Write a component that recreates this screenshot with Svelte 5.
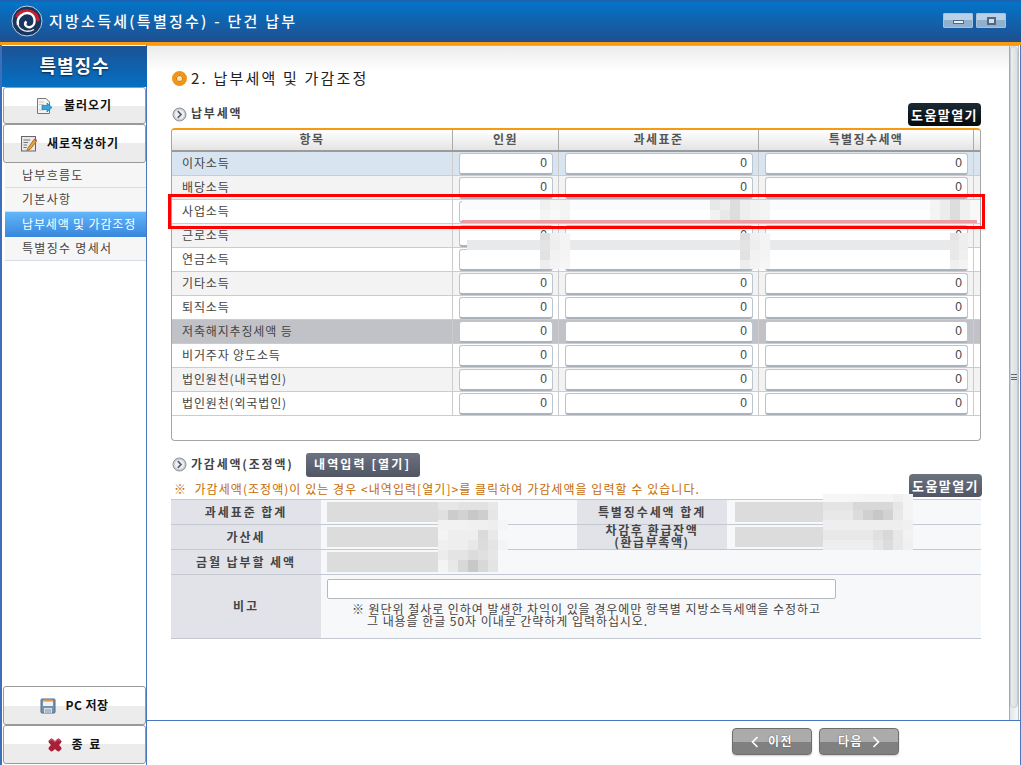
<script>
  const rows = [
    { label: '이자소득', tone: 'blue', vals: ['0', '0', '0'] },
    { label: '배당소득', tone: 'alt', vals: ['0', '0', '0'] },
    { label: '사업소득', tone: '', vals: ['', '', ''] },
    { label: '근로소득', tone: 'alt', vals: ['0', '0', '0'] },
    { label: '연금소득', tone: '', vals: ['', '', ''] },
    { label: '기타소득', tone: 'alt', vals: ['0', '0', '0'] },
    { label: '퇴직소득', tone: '', vals: ['0', '0', '0'] },
    { label: '저축해지추징세액 등', tone: 'dark', vals: ['0', '0', '0'] },
    { label: '비거주자 양도소득', tone: '', vals: ['0', '0', '0'] },
    { label: '법인원천(내국법인)', tone: 'alt', vals: ['0', '0', '0'] },
    { label: '법인원천(외국법인)', tone: '', vals: ['0', '0', '0'] }
  ];
  const menu = ['납부흐름도', '기본사항', '납부세액 및 가감조정', '특별징수 명세서'];

  // Mosaic (pixelated) redaction patches that lie over the form: [x, y, w, h, colour]
  const bands = [
    [462, 200, 515, 10, '#fafbfc'],
    [462, 220, 515, 3, '#e8a0a4'],
    [467, 240, 501, 10, '#e8e9eb']
  ];
  const grid = (x, ys, ws, data) => {
    const out = [];
    data.forEach((line, r) => {
      let cx = x;
      line.forEach((c, i) => {
        if (c) out.push([cx, ys[r], ws, ys[r + 1] - ys[r], '#' + c]);
        cx += ws;
      });
    });
    return out;
  };
  const cells = [
    ...grid(540, [200, 210, 220], 10, [['f0f0f0', 'f6f6f6', 'f4f4f4'], ['f4f4f4', 'f8f8f8', 'f4f4f4']]),
    ...grid(710, [200, 210, 220], 10, [['e8e8e8', 'eeeeee', 'dddddd', 'eeeeee', 'f2f2f2', 'f4f4f4'], ['f2f2f2', 'e8e8e8', 'dddddd', 'eeeeee', 'f2f2f2', 'f4f4f4']]),
    ...grid(930, [200, 210, 220], 10, [['f4f4f4', 'ececec', 'dddddd', 'f0f0f0', 'f8f8f8'], ['f4f4f4', 'ececec', 'dddddd', 'f0f0f0', 'f8f8f8']]),
    ...grid(540, [233, 240, 250, 260, 269], 10, [['dedede', 'f0f0f0', 'f4f4f4'], ['e4e4e4', 'eeeeee', 'f4f4f4'], ['e2e2e2', 'f2f2f2', 'f4f4f4'], ['eeeeee', 'f4f4f4', 'f6f6f6']]),
    ...grid(740, [233, 240, 250, 260, 269], 10, [['dedede', 'f0f0f0', 'f4f4f4'], ['e4e4e4', 'eeeeee', 'f4f4f4'], ['e2e2e2', 'f2f2f2', 'f4f4f4'], ['eeeeee', 'f4f4f4', 'f6f6f6']]),
    ...grid(950, [233, 240, 250, 260, 269], 9, [['e4e4e4', 'eeeeee'], ['e8e8e8', 'eeeeee'], ['e8e8e8', 'f0f0f0'], ['f0f0f0', 'f4f4f4']]),
    ...grid(438, [502, 510, 520, 530, 540, 550, 560, 572], 10, [
      ['e6e6e6', 'e6e6e6', 'e2e2e2', 'e2e2e2', 'e2e2e2', 'e8e8e8'],
      ['e0e0e0', 'cccccc', 'd2d2d2', 'c8c8c8', 'cecece', 'e6e6e6'],
      ['f2f2f2', 'f2f2f2', 'f2f2f2', 'f0f0f0', 'f0f0f0', 'eeeeee', 'f5f5f5'],
      ['f4f4f4', 'eeeeee', 'eeeeee', 'eeeeee', 'dadada', 'e8e8e8'],
      ['f0f0f0', 'eeeeee', 'eeeeee', 'e8e8e8', 'dcdcdc', 'e4e4e4', 'f4f4f4'],
      ['ececec', 'e4e4e4', 'e4e4e4', 'dcdcdc', 'e0e0e0', 'e6e6e6'],
      ['f4f4f4', 'e8e8e8', 'd8d8d8', 'c8c8c8', 'd8d8d8', 'e4e4e4']
    ]),
    ...grid(823, [494, 502, 510, 520, 530, 540, 550], 10, [
      ['f6f6f6', 'f6f6f6', 'f6f6f6', 'f6f6f6', 'f4f4f4', 'f4f4f4', 'f4f4f4', 'f0f0f0', 'f4f4f4'],
      ['e4e4e4', 'e4e4e4', 'e4e4e4', 'd8d8d8', 'd8d8d8', 'd8d8d8', 'd8d8d8', 'e6e6e6', 'f4f4f4'],
      ['e8e8e8', 'e8e8e8', 'e8e8e8', 'dcdcdc', 'd0d0d0', 'c8c8c8', 'd2d2d2', 'e8e8e8', 'f4f4f4'],
      ['eeeeee', 'eeeeee', 'eeeeee', 'eeeeee', 'eeeeee', 'eeeeee', 'eeeeee', 'eeeeee', 'f0f0f0'],
      ['e8e8e8', 'e8e8e8', 'e8e8e8', 'e8e8e8', 'e8e8e8', 'e0e0e0', 'd8d8d8', 'e8e8e8', 'f2f2f2'],
      ['eeeeee', 'eeeeee', 'eeeeee', 'eeeeee', 'eeeeee', 'e6e6e6', 'dcdcdc', 'e8e8e8', 'f0f0f0']
    ])
  ];
  const patches = [...bands, ...cells];
</script>

{#snippet chevron()}
  <svg class="bullet" viewBox="0 0 15 15" aria-hidden="true">
    <circle cx="7.5" cy="7.5" r="6.5" fill="#c9ced6" stroke="#8d939c" />
    <circle cx="7.5" cy="7.5" r="4.6" fill="#eef0f3" />
    <path d="M5.8 4.2 9 7.5 5.8 10.8" fill="none" stroke="#5b6068" stroke-width="1.7" />
  </svg>
{/snippet}

<div class="win">
  <header class="top">
    <svg class="logo" viewBox="0 0 32 32" aria-hidden="true">
      <circle cx="16" cy="16" r="15" fill="#17365f" stroke="#c3cfdf" />
      <path d="M5.500 12C9 3.500 24 3 27.500 16" fill="none" stroke="#c8202f" stroke-width="3.200" />
      <path d="M7 20C5 12 13 6.500 19 8.500 25 11 25 20.500 19.500 22 15 23 12.500 19 15.500 16.500" fill="none" stroke="#fff" stroke-width="2.400" />
      <path d="M7 20C9.500 26 17 28 23 24.500" fill="none" stroke="#e8edf3" stroke-width="1.400" />
    </svg>
    <h1>지방소득세(특별징수) - 단건 납부</h1>
    <div class="winbtns">
      <button class="wb" aria-label="최소화"><span class="min"></span></button>
      <button class="wb" aria-label="최대화"><span class="max"></span></button>
    </div>
  </header>

  <div class="body">
    <aside class="side">
      <div class="side-title">특별징수</div>
      <button class="sbtn first">
        <svg class="ic" viewBox="0 0 18 18" aria-hidden="true">
          <path d="M2.500 1.500H11L14.500 5V16.500H2.500Z" fill="#f4f4f4" stroke="#777" />
          <path d="M4.500 5H9M4.500 7.500H9M4.500 13H9" stroke="#999" stroke-dasharray="1 1" />
          <path d="M7 8.500H12V6L17 10.500 12 15V12.500H7Z" fill="#35a7dd" stroke="#1a78b0" stroke-width=".7" />
        </svg>
        <span>불러오기</span>
      </button>
      <button class="sbtn second">
        <svg class="ic" viewBox="0 0 18 18" aria-hidden="true">
          <rect x="1.500" y="1.500" width="14" height="14.500" fill="#e8e8e4" stroke="#666" />
          <path d="M3.500 5H10M3.500 7.500H8M3.500 10H7M3.500 12.500H6.500" stroke="#777" />
          <path d="M7.500 13.500 14 4.500 16.500 6.500 10 14.500 7 15.500Z" fill="#e9a03a" stroke="#8a5a18" stroke-width=".7" />
          <path d="M14 4.500 15 3 17 5 16.500 6.500Z" fill="#d04a5a" />
        </svg>
        <span>새로작성하기</span>
      </button>
      <nav class="menu">
        {#each menu as item, i}
          <div class="mi" class:on={i === 2}>{item}</div>
        {/each}
      </nav>
      <div class="grow"></div>
      <button class="sbtn pc">
        <svg class="ic save" viewBox="0 0 16 16" aria-hidden="true">
          <rect x="1" y="1" width="14" height="14" rx="1" fill="#6f94ba" stroke="#566b84" />
          <rect x="3" y="1.500" width="10" height="2" fill="#e29a4c" />
          <rect x="3" y="3.500" width="10" height="4.500" fill="#eef2f6" />
          <rect x="4" y="10" width="8" height="5" fill="#d9dee4" />
          <path d="M6 11V15M8 11V15M10 11V15" stroke="#8a97a6" />
        </svg>
        <span>PC 저장</span>
      </button>
      <button class="sbtn quit">
        <svg class="ic x" viewBox="0 0 16 16" aria-hidden="true">
          <path d="M1.500 4 4 1.500C5 1 6.500 2.500 8 4 9.500 2.500 11 1 12 1.500L14.500 4C15 5 13.500 6.500 12 8 13.500 9.500 15 11 14.500 12L12 14.500C11 15 9.500 13.500 8 12 6.500 13.500 5 15 4 14.500L1.500 12C1 11 2.500 9.500 4 8 2.500 6.500 1 5 1.500 4Z" fill="#a82038" />
          <path d="M3 4 5 2.500 8 5 11 2.500 13 4" fill="none" stroke="#cf5a6c" />
        </svg>
        <span class="wide">종 료</span>
      </button>
    </aside>

    <div class="main">
      <div class="panel">
        <section class="content">
          <h2>
            <span class="dot"></span>
            2. 납부세액 및 가감조정
          </h2>

          <div class="sub one">
            {@render chevron()}
            <strong>납부세액</strong>
            <button class="help black">도움말열기</button>
          </div>

          <div class="tbl">
            <div class="row head">
              <div class="c lab">항목</div>
              <div class="c n">인원</div>
              <div class="c b">과세표준</div>
              <div class="c t">특별징수세액</div>
              <div class="gut"></div>
            </div>
            {#each rows as r}
              <div class="row {r.tone}">
                <div class="c lab">{r.label}</div>
                <div class="c n"><input readonly value={r.vals[0]} aria-label="인원" /></div>
                <div class="c b"><input readonly value={r.vals[1]} aria-label="과세표준" /></div>
                <div class="c t"><input readonly value={r.vals[2]} aria-label="특별징수세액" /></div>
                <div class="gut"></div>
              </div>
            {/each}
          </div>

          <div class="sub two">
            {@render chevron()}
            <strong>가감세액(조정액)</strong>
            <button class="slate entry">내역입력 [열기]</button>
          </div>
          <div class="notice">
            <p>※&nbsp; 가감세액(조정액)이 있는 경우 &lt;내역입력[열기]&gt;를 클릭하여 가감세액을 입력할 수 있습니다.</p>
            <button class="help slate">도움말열기</button>
          </div>

          <div class="sum">
            <div class="sl">과세표준 합계</div>
            <div class="sv"><i class="fill"></i></div>
            <div class="sl">특별징수세액 합계</div>
            <div class="sv far"><i class="fill"></i></div>

            <div class="sl">가산세</div>
            <div class="sv"><i class="fill"></i></div>
            <div class="sl tight">차감후 환급잔액<br />(환급부족액)</div>
            <div class="sv far"><i class="fill"></i></div>

            <div class="sl">금월 납부할 세액</div>
            <div class="sv span3"><i class="fill long"></i></div>

            <div class="sl last">비고</div>
            <div class="sv span3 last note">
              <input readonly aria-label="비고" />
              <p>※ 원단위 절사로 인하여 발생한 차익이 있을 경우에만 항목별 지방소득세액을 수정하고<br /><span>그 내용을 한글 50자 이내로 간략하게 입력하십시오.</span></p>
            </div>
          </div>
        </section>
        <div class="scroll">
          <div class="thumb"><span></span></div>
        </div>
      </div>
      <footer class="foot">
        <button class="nav">
          <svg class="chev" viewBox="0 0 8 12" aria-hidden="true"><path d="M6.500 1 1.500 6 6.500 11" /></svg>
          <span>이전</span>
        </button>
        <button class="nav">
          <span>다음</span>
          <svg class="chev" viewBox="0 0 8 12" aria-hidden="true"><path d="M1.500 1 6.500 6 1.500 11" /></svg>
        </button>
      </footer>
    </div>
  </div>

  {#each patches as p}
    <div class="patch" style="left:{p[0]}px;top:{p[1]}px;width:{p[2]}px;height:{p[3]}px;background:{p[4]}"></div>
  {/each}
  <div class="mark"></div>
</div>

<style>
  :global(body) { margin: 0; background: #fff; }
  * { box-sizing: border-box; }
  .win {
    position: relative; width: 1021px; height: 765px; overflow: hidden;
    display: flex; flex-direction: column; background: #fff;
    font: 12px/1.2 "Noto Sans CJK KR", "Liberation Sans", sans-serif; color: #333;
    letter-spacing: .85px;
  }
  button { font: inherit; letter-spacing: inherit; padding: 0; cursor: default; }
  p, h1, h2 { margin: 0; }

  .top {
    height: 45px; flex: none; display: flex; align-items: center; padding: 0 15px 3px 11px;
    border-top: 2px solid #2061b0; border-bottom: 3px solid #f79a12;
    background: linear-gradient(#0374c8, #1f4f90);
  }
  .logo { width: 32px; height: 32px; }
  h1 { margin-left: 6px; font-size: 15px; font-weight: 500; color: #fff; letter-spacing: 2.25px; }
  .winbtns { margin-left: auto; display: flex; gap: 3px; }
  .wb {
    width: 30px; height: 15px; display: flex; align-items: center; justify-content: center;
    border: 1px solid #a9c2da; border-radius: 1px;
    background: linear-gradient(#b9d0e6 0 50%, #8fb0cf 50% 100%);
  }
  .min { width: 11px; height: 4px; margin-top: 3px; background: #e8eef4; border: 1px solid #55677e; }
  .max { width: 9px; height: 8px; border: 2px solid #55677e; background: #cfdfee; }

  .body { flex: 1; min-height: 0; display: flex; border-left: 2px solid #3d6fb8; border-right: 1px solid #4a78c0; }

  .side { width: 145px; flex: none; display: flex; flex-direction: column; border-right: 1px solid #4a78c0; padding-top: 1px; }
  .side-title {
    height: 41px; flex: none; display: flex; align-items: center; justify-content: center; padding-bottom: 1px;
    color: #fff; font-size: 18px; font-weight: 700; letter-spacing: 1px;
    text-shadow: 0 1px 2px #123; margin-right: -1px;
    background: linear-gradient(#1c5294, #0470c4);
  }
  .sbtn {
    flex: none; margin-left: 1px; display: flex; align-items: center; justify-content: center; gap: 9px;
    border: 1px solid #999; border-radius: 3px; color: #111; font-weight: 700; letter-spacing: 1px;
    background: linear-gradient(#fff 0 50%, #ececec 50% 100%);
  }
  .first { height: 37px; padding-right: 2px; gap: 11px; }
  .second { height: 39px; padding-right: 10px; }
  .pc { height: 39px; padding-right: 0; letter-spacing: .5px; }
  .quit { height: 39px; padding-right: 0; margin-bottom: 1px; }
  .wide { letter-spacing: 2px; }
  .ic { width: 18px; height: 18px; flex: none; }
  .save { width: 16px; height: 16px; }
  .x { width: 16px; height: 16px; }
  .menu { margin-left: 3px; }
  .mi {
    height: 24.500px; padding: 0 0 0 17px; display: flex; align-items: center;
    background: #f6f6f6; border-bottom: 1px solid #d5dde8; color: #444; letter-spacing: 1.3px;
  }
  .mi.on { color: #fff; background: linear-gradient(#62b6fa, #3a88dd); border-bottom-color: #3a88dd; letter-spacing: .85px; }
  .grow { flex: 1; }

  .main { flex: 1; min-width: 0; display: flex; flex-direction: column; }
  .panel { height: 676px; flex: none; display: flex; border-bottom: 1px solid #4a78c0; }
  .content {
    flex: 1; min-width: 0; padding: 24px 28px 0 24px;
    border-top: 1px solid #aeb3b8;
    background: linear-gradient(#ececec, #fff 26px);
  }
  h2 { display: flex; align-items: center; height: 16px; font-size: 15px; font-weight: 400; letter-spacing: 2.2px; color: #222; gap: 4px; }
  .dot { width: 15px; height: 15px; border-radius: 50%; border: 4px solid #f09416; background: #f8e2b8; box-shadow: inset 0 0 0 1px #c77a10; margin-left: 1px; }

  .sub { display: flex; align-items: center; gap: 4px; }
  .bullet { width: 15px; height: 15px; margin-left: 1px; flex: none; }
  .sub strong { font-weight: 700; color: #444; letter-spacing: 1.8px; }
  .one { height: 23px; margin-top: 17px; }
  .one strong { margin-top: -2px; }
  .help {
    margin-left: auto; width: 73px; height: 23px; border-radius: 4px; color: #fff; font-size: 13px; font-weight: 700;
    letter-spacing: 1.4px; border: none;
  }
  .black { background: linear-gradient(#1d2a33, #04090d); }
  .slate { background: linear-gradient(#6d7281, #515665); color: #fff; border: 1px solid #777c8a; font-weight: 700; }

  .tbl {
    margin-top: 2px; height: 313px; border: 1px solid #a5a5a5; border-top: 2px solid #f79a12;
    border-radius: 4px; overflow: hidden; background: #fff;
  }
  .row { height: 24px; display: flex; border-bottom: 1px solid #ccc; background: #fff; }
  .row.alt { background: #f3f3f3; }
  .row.blue { background: #d8e5f1; }
  .row.dark { background: #c0c2c8; }
  .c { height: 100%; border-right: 1px solid #ccc; display: flex; align-items: flex-start; padding: 1px 5px 0 6px; flex: none; }
  .lab { width: 281px; padding: 0 0 1px 10px; color: #444; align-items: center; }
  .n { width: 106px; }
  .b { width: 200px; }
  .t { width: 215px; padding-right: 5px; }
  .gut { flex: 1; }
  .head { height: 22px; border-bottom: 2px solid #9b9b9b; background: linear-gradient(#fff, #e4e4e4); }
  .head .c { justify-content: center; align-items: center; font-weight: 700; color: #555; border-right-color: #aaa; padding: 0 0 1px; letter-spacing: 1.4px; }
  .c input {
    width: 100%; height: 22px; text-align: right; padding: 0 5px 1px 0;
    font: 12px "Liberation Sans", sans-serif; color: #444;
    border: 1px solid #bcc4cf; border-bottom: 2px solid #aab2bd; border-radius: 3px; background: #fff; outline: none;
  }

  .two { height: 25px; margin-top: 11px; gap: 4px; }
  .entry { width: 114px; height: 24px; margin-left: 8px; border-radius: 3px; letter-spacing: 2.1px; border: none; }
  .notice { display: flex; height: 23px; margin-top: -3px; align-items: flex-end; }
  .notice p { color: #c66a00; padding: 0 0 2px 3px; letter-spacing: 1.05px; margin-bottom: -1px; }
  .notice .help { width: 73px; margin-right: -1px; border: none; border-radius: 4px; }

  .sum {
    margin-top: 2px; display: grid; grid-template-columns: 150px 256px 150px 254px;
    grid-template-rows: 25px 25px 25px 64px; border-top: 1px solid #c4c8d0;
  }
  .sl {
    background: #e1e3e8; border-bottom: 1px solid #c4c8d0; display: flex; align-items: center; justify-content: center;
    text-align: center; font-weight: 700; color: #444; letter-spacing: 1.9px; white-space: nowrap;
  }
  .tight { line-height: 12px; padding-bottom: 2px; letter-spacing: 1.6px; }
  .sv { background: #f7f8fa; border-bottom: 1px solid #c4c8d0; padding: 2px 0 0 6px; }
  .far { padding-left: 8px; }
  .span3 { grid-column: span 3; }
  .fill { display: block; width: 118px; height: 20px; background: #dcdcdc; }
  .fill.long { width: 170px; }
  .last { border-bottom: 1px solid #c4c8d0; }
  .note { padding-top: 4px; }
  .note input { display: block; width: 509px; height: 20px; border: 1px solid #b5b8bd; border-radius: 2px; background: #fff; outline: none; }
  .note p { margin: 4px 0 0 25px; line-height: 12px; color: #444; font-size: 12px; letter-spacing: .95px; white-space: nowrap; }
  .note span { margin-left: 15px; }

  .scroll { width: 10px; flex: none; margin-right: 1px; background: linear-gradient(90deg, #e2e6ec, #f6f7f9); border-left: 1px solid #aaa; border-right: 1px solid #bbb; border-top: 1px solid #aaa; }
  .thumb {
    height: 662px; border: 1px solid #c8ccd2; border-radius: 4px; display: flex; align-items: center; justify-content: center;
    background: linear-gradient(90deg, #eceef1, #dadde2);
  }
  .thumb span { width: 6px; height: 6px; border-top: 1px solid #667; border-bottom: 1px solid #667; position: relative; }
  .thumb span::after { content: ""; position: absolute; left: 0; right: 0; top: 1.500px; height: 1px; background: #667; }

  .foot { flex: 1; display: flex; justify-content: flex-end; gap: 7px; padding: 7px 121px 0 0; }
  .nav {
    width: 80px; height: 27px; border: 1px solid #6e6e6e; border-radius: 4px; color: #fff; font-size: 12px; font-weight: 700;
    letter-spacing: 1.5px; display: flex; align-items: center; justify-content: center; gap: 9px; text-shadow: 0 0 1px #333;
    background: linear-gradient(#ababab 0 50%, #808080 50% 100%);
    box-shadow: 0 1px 2px #ccc;
  }
  .chev { width: 8px; height: 12px; flex: none; }
  .chev path { fill: none; stroke: #fff; stroke-width: 1.600; }

  .patch { position: absolute; }
  .mark { position: absolute; left: 168px; top: 194px; width: 817px; height: 35px; border: 3px solid #f00; }
</style>
